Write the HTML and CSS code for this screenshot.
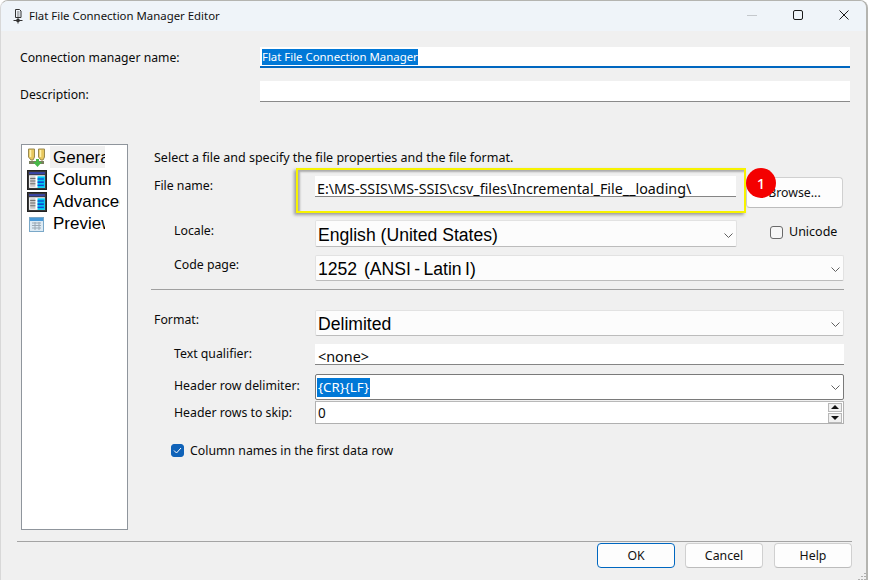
FILE: index.html
```html
<!DOCTYPE html>
<html lang="en">
<head>
<meta charset="utf-8">
<title>Flat File Connection Manager Editor</title>
<link rel="stylesheet" href="styles.css">
</head>
<body>
<svg class="defs" width="0" height="0" aria-hidden="true">
  <symbol id="chev" viewBox="0 0 9 5"><path d="M.5.500 4.500 4.500 8.500.500" fill="none" stroke="#606060" stroke-width="1"/></symbol>
  <symbol id="cols" viewBox="0 0 19 19">
    <rect x=".5" y=".5" width="18" height="18" fill="#3c3c3c" stroke="#222"/>
    <rect x="2" y="2" width="15" height="2" fill="#3a46a8"/>
    <rect x="2" y="5" width="15" height="12" fill="#fff"/>
    <rect x="3" y="6" width="5" height="10" fill="#c8c8c8"/>
    <path d="M3 8h5M3 10.500h5M3 13h5" stroke="#707070"/>
    <rect x="10" y="6" width="7" height="11" fill="#00c8f0"/>
    <path d="M10 8.500h6M10 11.500h6M10 14.500h6" stroke="#1420c8"/>
  </symbol>
</svg>
<div class="window">
  <header class="titlebar">
    <svg class="app-icon" viewBox="0 0 10 15" width="10" height="15" aria-hidden="true">
      <path d="M2.500.5h4l1.500 1.500v6.500h-5.500z" fill="none" stroke="#333"/>
      <path d="M4 3h2.500M4 5h2.500M4 7h2.500" stroke="#555" stroke-width=".8"/>
      <path d="M5 8.500v6M.5 11.500h9" stroke="#333"/>
      <rect x="3.500" y="10" width="3" height="3" fill="#333"/>
    </svg>
    <span class="title-text">Flat File Connection Manager Editor</span>
    <div class="window-controls">
      <svg width="10" height="10" viewBox="0 0 10 10" aria-hidden="true"><path d="M0 5.500h10" stroke="#c4c8cc"/></svg>
      <svg width="10" height="10" viewBox="0 0 10 10" aria-hidden="true"><rect x=".5" y=".5" width="9" height="9" rx="1.500" fill="none" stroke="#1a1a1a"/></svg>
      <svg width="10" height="10" viewBox="0 0 10 10" aria-hidden="true"><path d="M.5.500l9 9M9.500.500l-9 9" stroke="#1a1a1a"/></svg>
    </div>
  </header>

  <div class="body">
    <section class="top-form">
      <div class="top-row">
        <label class="top-label">Connection manager name:</label>
        <div class="top-field focused"><span class="selected">Flat File Connection Manager</span></div>
      </div>
      <div class="top-row">
        <label class="top-label low">Description:</label>
        <div class="top-field"></div>
      </div>
    </section>

    <section class="main">
      <nav class="side-list">
        <div class="side-item"><svg class="side-icon" viewBox="0 0 20 20" width="20" height="20" aria-hidden="true">
          <path d="M1.500 1h6v8l-1.500 3H4L1.500 9zM11.500 1h6v8l-1.500 3h-2l-2.500-3z" fill="#e8c860" stroke="#9a8a50"/>
          <path d="M3.500 2v7M13.500 2v7" stroke="#fff3b0" stroke-width="1.500"/>
          <path d="M2 13h15v3H2z" fill="#7a8060"/>
          <path d="M9 11h3v3h3l-4.500 5L6 14h3z" fill="#48b848"/>
        </svg><span class="side-clip hl">General</span></div>
        <div class="side-item"><svg class="side-icon" width="20" height="20" aria-hidden="true"><use href="#cols"/></svg><span class="side-clip wide">Columns</span></div>
        <div class="side-item"><svg class="side-icon" width="20" height="20" aria-hidden="true"><use href="#cols"/></svg><span class="side-clip wider">Advanced</span></div>
        <div class="side-item"><svg class="side-icon small" viewBox="0 0 15 15" width="15" height="15" aria-hidden="true">
          <rect x=".5" y=".5" width="14" height="14" fill="#dceaf4" stroke="#7aa8c8"/>
          <rect x="1" y="1" width="13" height="3" fill="#4a9ad8"/>
          <path d="M3 6h9M3 8.500h9M3 11h9M6 5v8M10 5v8" stroke="#9aa8b4"/>
        </svg><span class="side-clip">Preview</span></div>
      </nav>

      <div class="pane">
        <p class="hint">Select a file and specify the file properties and the file format.</p>

        <div class="row file-row">
          <label class="lbl">File name:</label>
          <div class="field underlined file-field">E:\MS-SSIS\MS-SSIS\csv_files\Incremental_File__loading\</div>
          <button class="btn browse">Browse...</button>
        </div>

        <div class="row locale-row">
          <label class="lbl indent off3">Locale:</label>
          <div class="combo locale-combo"><span>English (United States)</span><svg class="chev" aria-hidden="true"><use href="#chev"/></svg></div>
          <label class="unicode"><span class="check"></span>Unicode</label>
        </div>

        <div class="row code-row">
          <label class="lbl indent">Code page:</label>
          <div class="combo"><span class="pre">1252  (ANSI - Latin I)</span><svg class="chev" aria-hidden="true"><use href="#chev"/></svg></div>
        </div>

        <hr class="sep">

        <div class="row format-row">
          <label class="lbl">Format:</label>
          <div class="combo"><span>Delimited</span><svg class="chev" aria-hidden="true"><use href="#chev"/></svg></div>
        </div>

        <div class="row qual-row">
          <label class="lbl indent">Text qualifier:</label>
          <div class="field underlined plain">&lt;none&gt;</div>
        </div>

        <div class="row delim-row">
          <label class="lbl indent off4">Header row delimiter:</label>
          <div class="combo active"><span class="selected-small">{CR}{LF}</span><svg class="chev" aria-hidden="true"><use href="#chev"/></svg></div>
        </div>

        <div class="row skip-row">
          <label class="lbl indent off4">Header rows to skip:</label>
          <div class="spin"><span>0</span>
            <div class="spin-btns"><span class="up"></span><span class="down"></span></div>
          </div>
        </div>

        <label class="names-check"><span class="check on"><svg width="9" height="7" viewBox="0 0 9 7" aria-hidden="true"><path d="M1 3.500 3.500 6 8 1" fill="none" stroke="#fff"/></svg></span>Column names in the first data row</label>
      </div>
    </section>

    <footer class="footer">
      <button class="btn default">OK</button>
      <button class="btn">Cancel</button>
      <button class="btn last">Help</button>
    </footer>
  </div>

  <div class="callout"></div>
  <div class="badge">1</div>
  <svg class="grip" width="8" height="8" viewBox="0 0 8 8" aria-hidden="true"><path d="M7 1v1M4 4v1M7 4v1M1 7v1M4 7v1M7 7v1" stroke="#b0b0b0" stroke-width="2"/></svg>
</div>
</body>
</html>
```

FILE: styles.css
```css
* { box-sizing: border-box; }
html, body { margin: 0; padding: 0; background: #fff; }
body { width: 869px; height: 580px; overflow: hidden; font-family: "Noto Sans", "Open Sans", sans-serif; font-size: 12.300px; color: #0a0a0a; }
.defs { position: absolute; }

.window { position: relative; width: 868px; height: 580px; background: #f0f0f0; border: 1px solid #b4b4b0; border-bottom: 0; border-left-color: #d8d8d8; border-right: 2px solid #b4b4b0; border-radius: 8px 8px 0 0; display: flex; flex-direction: column; overflow: hidden; }

.titlebar { height: 30px; flex: none; background: #eff4f9; display: flex; align-items: center; padding-left: 12px; }
.app-icon { flex: none; }
.title-text { margin: 0 0 2px 6px; font-size: 11.400px; color: #111; }
.window-controls { margin-left: auto; margin-right: 17px; margin-bottom: 2px; display: flex; align-items: center; gap: 36px; }

.body { flex: 1; display: flex; flex-direction: column; min-height: 0; }

.top-form { padding: 16px 16px 0 19px; display: flex; flex-direction: column; gap: 13px; }
.top-row { display: flex; align-items: center; height: 21px; }
.top-label { width: 240px; flex: none; font-size: 12.200px; }
.top-label.low { margin-top: 6px; }
.top-field { flex: 1; height: 21px; background: #fff; border-bottom: 1px solid #8a8a8a; padding: 2px 0 0 2px; font-size: 11.400px; line-height: 16px; }
.top-field.focused { border-bottom: 2px solid #0067c0; }
.selected { background: #0078d7; color: #fff; display: inline-block; line-height: 16px; }

.main { display: flex; margin-top: 42px; padding-left: 20px; height: 386px; }
.side-list { width: 107px; flex: none; background: #fff; border: 1px solid #8f959c; padding-top: 2px; display: flex; flex-direction: column; overflow: hidden; }
.side-item { height: 22px; display: flex; align-items: center; padding-left: 5px; font-family: "Liberation Sans", Arial, sans-serif; font-size: 17px; color: #000; }
.side-icon { flex: none; margin-right: 6px; }
.side-icon.small { margin: 0 9px 0 2px; }
.side-clip { width: 52px; overflow: hidden; white-space: nowrap; line-height: 22px; }
.side-clip.hl { width: 55px; height: 22px; align-self: flex-start; margin: -1px 0 0 -3px; padding-left: 3px; line-height: 24px; background: #f0f0f0; }
.side-clip.wide { width: 59px; }
.side-clip.wider { width: 67px; }

.pane { width: 693px; margin-left: 23px; display: flex; flex-direction: column; }
.hint { margin: 6px 0 0 3px; height: 15px; line-height: 15px; font-size: 12.500px; }
.row { display: flex; align-items: flex-start; }
.lbl { width: 164px; flex: none; padding: 2px 0 0 3px; line-height: 16px; }
.lbl.indent { padding-left: 23px; }
.lbl.off3 { padding-top: 3px; }
.lbl.off4 { padding-top: 4px; }

.field { background: #fff; height: 21px; }
.underlined { border-bottom: 1px solid #858585; }
.file-row { margin-top: 11px; height: 32px; }
.file-field { width: 421px; padding: 3px 0 0 2px; font-size: 14.300px; line-height: 19px; }
.browse { margin: 1px 0 0 10px; width: 97px; height: 31px; padding-top: 3px; }

.btn { background: #fdfdfd; border: 1px solid #d0d0d0; border-bottom-color: #bcbcbc; border-radius: 4px; font-family: inherit; font-size: 12.300px; color: #111; padding: 0; }
.btn.default { border: 1px solid #0067c0; }

.combo { flex: 1; height: 27px; background: #fcfcfc; border: 1px solid #e2e2e2; border-bottom-color: #bcbcbc; border-radius: 2px; display: flex; align-items: center; padding: 2px 0 0 2px; font-family: "Liberation Sans", Arial, sans-serif; font-size: 17.600px; color: #000; }
.combo .chev { margin-left: auto; margin-right: 3px; width: 9px; height: 5px; flex: none; }
.pre { white-space: pre; word-spacing: -1.500px; }
.locale-row { margin-top: 12px; height: 27px; }
.locale-combo { flex: none; width: 422px; padding-top: 3px; }
.unicode { margin: 5px 0 0 33px; display: flex; align-items: center; font-size: 12.500px; line-height: 14px; }
.check { width: 13px; height: 13px; border: 1px solid #6a6a6a; border-radius: 3px; background: #f6f6f6; margin-right: 6px; display: flex; align-items: center; justify-content: center; flex: none; }
.check.on { background: #0f62b8; border-color: #0f62b8; }

.code-row { margin-top: 8px; height: 26px; }
.code-row .combo { height: 26px; }
.sep { width: 100%; height: 1px; border: 0; background: #a0a0a0; margin: 8px 0 0; flex: none; }
.format-row { margin-top: 20px; height: 26px; }
.format-row .combo { height: 26px; }
.qual-row { margin-top: 8px; height: 21px; }
.plain { flex: 1; padding: 3px 0 0 3px; font-size: 14.400px; line-height: 19px; }
.delim-row { margin-top: 9px; height: 26px; }
.delim-row .combo { height: 26px; padding-top: 0; }
.combo.active { border: 1px solid #7a7a7a; background: #fff; }
.selected-small { background: #0078d7; color: #fff; font-family: "Noto Sans", sans-serif; font-size: 13.300px; line-height: 19px; margin-left: -1px; padding: 0 1px; }
.skip-row { margin-top: 1px; height: 23px; }
.spin { flex: 1; height: 23px; background: #fff; border: 1px solid #b0b0b0; border-top-color: #b8b8b8; display: flex; align-items: center; padding-left: 2px; font-size: 13.500px; position: relative; }
.spin-btns { margin-left: auto; margin-right: 1px; width: 14px; height: 20px; display: flex; flex-direction: column; gap: 1px; }
.spin-btns span { flex: 1; background: #f0f0f0; border: 1px solid #b8b8b8; display: flex; align-items: center; justify-content: center; }
.spin-btns .up::before { content: ""; border: 4px solid transparent; border-top: 0; border-bottom-color: #111; }
.spin-btns .down::before { content: ""; border: 4px solid transparent; border-bottom: 0; border-top-color: #111; }
.names-check { margin: 19px 0 0 20px; display: flex; align-items: center; height: 14px; }

.footer { margin: 11px 0 0 16px; width: 835px; border-top: 1px solid #a4a4a4; display: flex; gap: 10px; justify-content: flex-end; padding-top: 1px; }
.footer .btn { width: 78px; height: 25px; }
.footer .btn.last { margin-left: 1px; }

.callout { position: absolute; left: 295px; top: 167px; width: 450px; height: 45px; border: 2px solid #f7f300; box-shadow: -2px 2px 3px rgba(90, 90, 90, .55), inset 2px 2px 2px rgba(90, 90, 90, .45); }
.badge { position: absolute; left: 745px; top: 167px; width: 30px; height: 30px; border-radius: 50%; background: #f40000; color: #fff; font-size: 15px; font-weight: 500; text-align: center; line-height: 30px; }
.grip { position: absolute; right: 0; bottom: 0; }
```
